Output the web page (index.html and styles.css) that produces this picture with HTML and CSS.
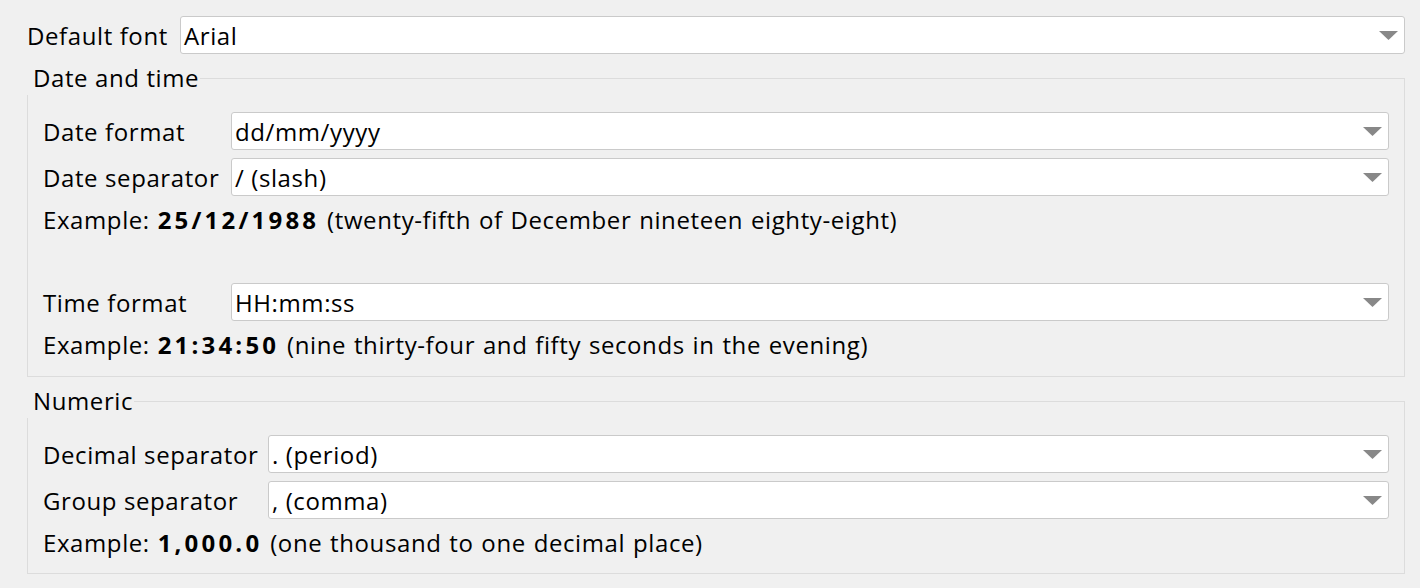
FILE: index.html
```html
<!DOCTYPE html>
<html lang="en">
<head>
<meta charset="utf-8">
<title>Locale settings</title>
<link rel="stylesheet" href="styles.css">
</head>
<body>
<div class="page">
  <div class="field-row top-row">
    <span class="label">Default font</span>
    <div class="combo"><span class="value">Arial</span><svg class="arrow" width="19" height="9" viewBox="0 0 19 9"><polygon points="0,0 19,0 9.5,9" /></svg></div>
  </div>

  <section class="group">
    <div class="group-head"><span class="group-title">Date and time</span><span class="head-line"></span></div>
    <div class="group-body">
      <div class="field-row date-row">
        <span class="label">Date format</span>
        <div class="combo"><span class="value">dd/mm/yyyy</span><svg class="arrow" width="19" height="9" viewBox="0 0 19 9"><polygon points="0,0 19,0 9.5,9" /></svg></div>
      </div>
      <div class="field-row date-row">
        <span class="label">Date separator</span>
        <div class="combo"><span class="value">/ (slash)</span><svg class="arrow" width="19" height="9" viewBox="0 0 19 9"><polygon points="0,0 19,0 9.5,9" /></svg></div>
      </div>
      <div class="example">Example: <b>25/12/1988</b> (twenty-fifth of December nineteen eighty-eight)</div>
      <div class="spacer"></div>
      <div class="field-row date-row">
        <span class="label">Time format</span>
        <div class="combo"><span class="value">HH:mm:ss</span><svg class="arrow" width="19" height="9" viewBox="0 0 19 9"><polygon points="0,0 19,0 9.5,9" /></svg></div>
      </div>
      <div class="example">Example: <b>21:34:50</b> (nine thirty-four and fifty seconds in the evening)</div>
    </div>
  </section>

  <section class="group">
    <div class="group-head"><span class="group-title">Numeric</span><span class="head-line"></span></div>
    <div class="group-body numeric-body">
      <div class="field-row num-row">
        <span class="label">Decimal separator</span>
        <div class="combo"><span class="value">. (period)</span><svg class="arrow" width="19" height="9" viewBox="0 0 19 9"><polygon points="0,0 19,0 9.5,9" /></svg></div>
      </div>
      <div class="field-row num-row">
        <span class="label">Group separator</span>
        <div class="combo"><span class="value">, (comma)</span><svg class="arrow" width="19" height="9" viewBox="0 0 19 9"><polygon points="0,0 19,0 9.5,9" /></svg></div>
      </div>
      <div class="example">Example: <b>1,000.0</b> (one thousand to one decimal place)</div>
    </div>
  </section>
</div>
</body>
</html>
```

FILE: styles.css
```css
html, body {
  margin: 0;
  padding: 0;
  background: #f0f0f0;
}

body {
  font-family: "Open Sans", "Noto Sans", sans-serif;
  font-size: 24px;
  letter-spacing: 0.6px;
  color: #000;
}

.page {
  padding: 16px 15px 0 27px;
}

.field-row {
  display: grid;
  align-items: center;
  height: 38px;
}

.top-row {
  grid-template-columns: 153px 1fr;
}

.date-row {
  grid-template-columns: 188px 1fr;
}

.num-row {
  grid-template-columns: 225px 1fr;
}

.label {
  white-space: nowrap;
}

.combo {
  height: 38px;
  box-sizing: border-box;
  background: #fff;
  border: 1px solid #cacaca;
  border-radius: 3px;
  display: flex;
  align-items: center;
  justify-content: space-between;
  padding: 0 6px 0 3px;
}

.combo .value {
  white-space: nowrap;
}

.arrow {
  fill: #888888;
  display: block;
}

.group {
  margin-top: 7px;
}

.group-head {
  display: flex;
  height: 34px;
}

.group-title {
  padding: 0 1px 0 6px;
  line-height: 34px;
  white-space: nowrap;
}

.head-line {
  flex: 1;
  margin-top: 17px;
  border-top: 1px solid #dcdcdc;
  border-right: 1px solid #dcdcdc;
}

.group-body {
  border: 1px solid #dcdcdc;
  border-top: none;
  padding: 17px 15px 15px 15px;
  display: flex;
  flex-direction: column;
  gap: 8px;
}

.numeric-body {
  padding-bottom: 14px;
}

.example {
  height: 32px;
  line-height: 32px;
  white-space: nowrap;
  word-spacing: 1px;
}

.example b {
  font-weight: 700;
  letter-spacing: 3.2px;
}

.spacer {
  height: 31px;
}
```
